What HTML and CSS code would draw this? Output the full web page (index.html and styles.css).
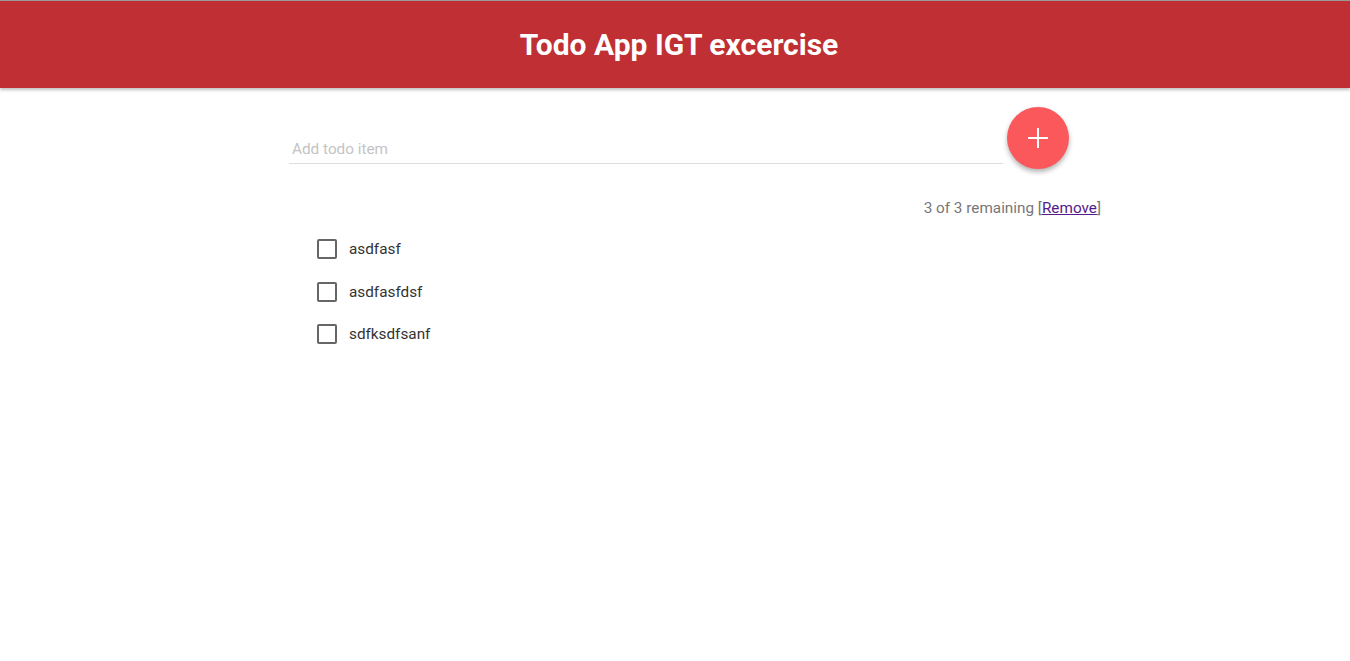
FILE: index.html
```html
<!DOCTYPE html>
<html>
<head>
<meta charset="utf-8">
<link rel="stylesheet" href="styles.css">
</head>
<body>
<header class="topbar">
  <h1 class="title">Todo App IGT excercise</h1>
</header>
<main class="content">
  <div class="add-row">
    <input class="todo-input" type="text" placeholder="Add todo item">
    <button class="fab" aria-label="Add">
      <svg width="24" height="24" viewBox="0 0 24 24"><path d="M12 2v20M2 12h20" stroke="#fff" stroke-width="2" fill="none"/></svg>
    </button>
  </div>
  <div class="status">3 of 3 remaining [<a class="remove" href="#">Remove</a>]</div>
  <ul class="list">
    <li class="item"><span class="box"></span><span class="label">asdfasf</span></li>
    <li class="item"><span class="box"></span><span class="label">asdfasfdsf</span></li>
    <li class="item"><span class="box"></span><span class="label">sdfksdfsanf</span></li>
  </ul>
</main>
</body>
</html>
```
FILE: styles.css
```css
html, body { margin: 0; padding: 0; background: #fff; }
body { font-family: Roboto, "Liberation Sans", sans-serif; }
.topbar {
  height: 88px;
  background: #c02f33;
  border-top: 1px solid #9a9a9a;
  box-shadow: 0 2px 3px rgba(0,0,0,0.25);
  display: flex;
  align-items: center;
  justify-content: center;
  box-sizing: border-box;
}
.title {
  margin: 0;
  color: #fff;
  font-size: 30px;
  font-weight: 700;
  position: relative;
  left: 4px;
  top: 0;
}
.content {
  width: 812px;
  margin-left: calc(50% - 386px);
  padding-top: 19px;
}
.add-row {
  display: flex;
  align-items: flex-end;
  gap: 4px;
}
.todo-input {
  width: 714px;
  height: 30px;
  border: none;
  border-bottom: 1px solid #dedede;
  padding: 0 3px;
  box-sizing: border-box;
  font-family: Roboto, "Liberation Sans", sans-serif;
  font-size: 15.3px;
  outline: none;
  margin-bottom: 5px;
}
.todo-input::placeholder { color: #c4c4c4; }
.fab {
  width: 62px;
  height: 62px;
  border-radius: 50%;
  border: none;
  background: #fb585c;
  box-shadow: 0 3px 5px rgba(0,0,0,0.3);
  display: flex;
  align-items: center;
  justify-content: center;
  padding: 0;
}
.status {
  text-align: right;
  color: #777;
  font-size: 15.3px;
  margin-top: 30px;
  line-height: 18px;
}
.remove { color: #551a8b; }
.list { list-style: none; margin: 11px 0 0; padding: 0 0 0 28px; }
.item {
  display: flex;
  align-items: center;
  height: 42.5px;
}
.box {
  width: 16px;
  height: 16px;
  border: 2px solid #666;
  border-radius: 2px;
  margin-right: 12px;
}
.label { font-size: 15.3px; color: #333; }
```
